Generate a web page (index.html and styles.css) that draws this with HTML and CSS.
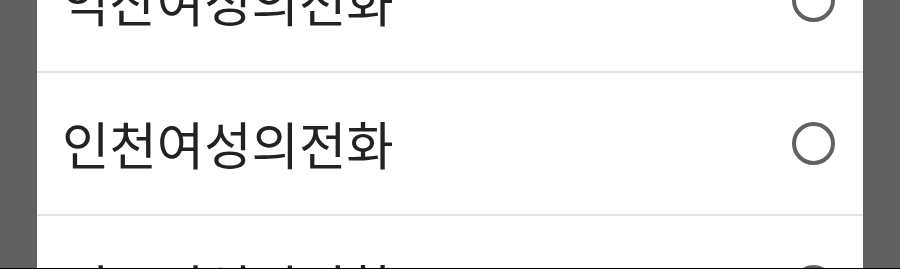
FILE: index.html
```html
<!DOCTYPE html>
<html lang="ko">
<head>
<meta charset="utf-8">
<link rel="stylesheet" href="styles.css">
</head>
<body>
<div class="dialog">
  <ul class="list">
    <li class="row"><span class="label">익산여성의전화</span><span class="radio"></span></li>
    <li class="row"><span class="label">인천여성의전화</span><span class="radio"></span></li>
    <li class="row"><span class="label">전주여성의전화</span><span class="radio"></span></li>
  </ul>
</div>
</body>
</html>
```
FILE: styles.css
```css
html {
  background: #000;
  margin: 0;
  height: 269px;
  overflow: hidden;
}
body {
  margin: 0;
  height: 268px;
  overflow: hidden;
  background: #606060;
}
.dialog {
  margin-left: 37px;
  width: 826px;
  height: 268px;
  background: #fff;
  overflow: hidden;
}
.list {
  list-style: none;
  margin: -70px 0 0 0;
  padding: 0;
}
.row {
  display: flex;
  align-items: center;
  justify-content: space-between;
  height: 141px;
  border-bottom: 2px solid #e3e3e3;
  padding: 0 28px 0 25px;
}
.label {
  font-family: "Noto Sans CJK KR", "Noto Sans", sans-serif;
  font-size: 51.5px;
  color: #222;
  line-height: 1;
  padding-bottom: 2px;
}
.radio {
  width: 35px;
  height: 35px;
  border: 4px solid #616161;
  border-radius: 50%;
}
```
